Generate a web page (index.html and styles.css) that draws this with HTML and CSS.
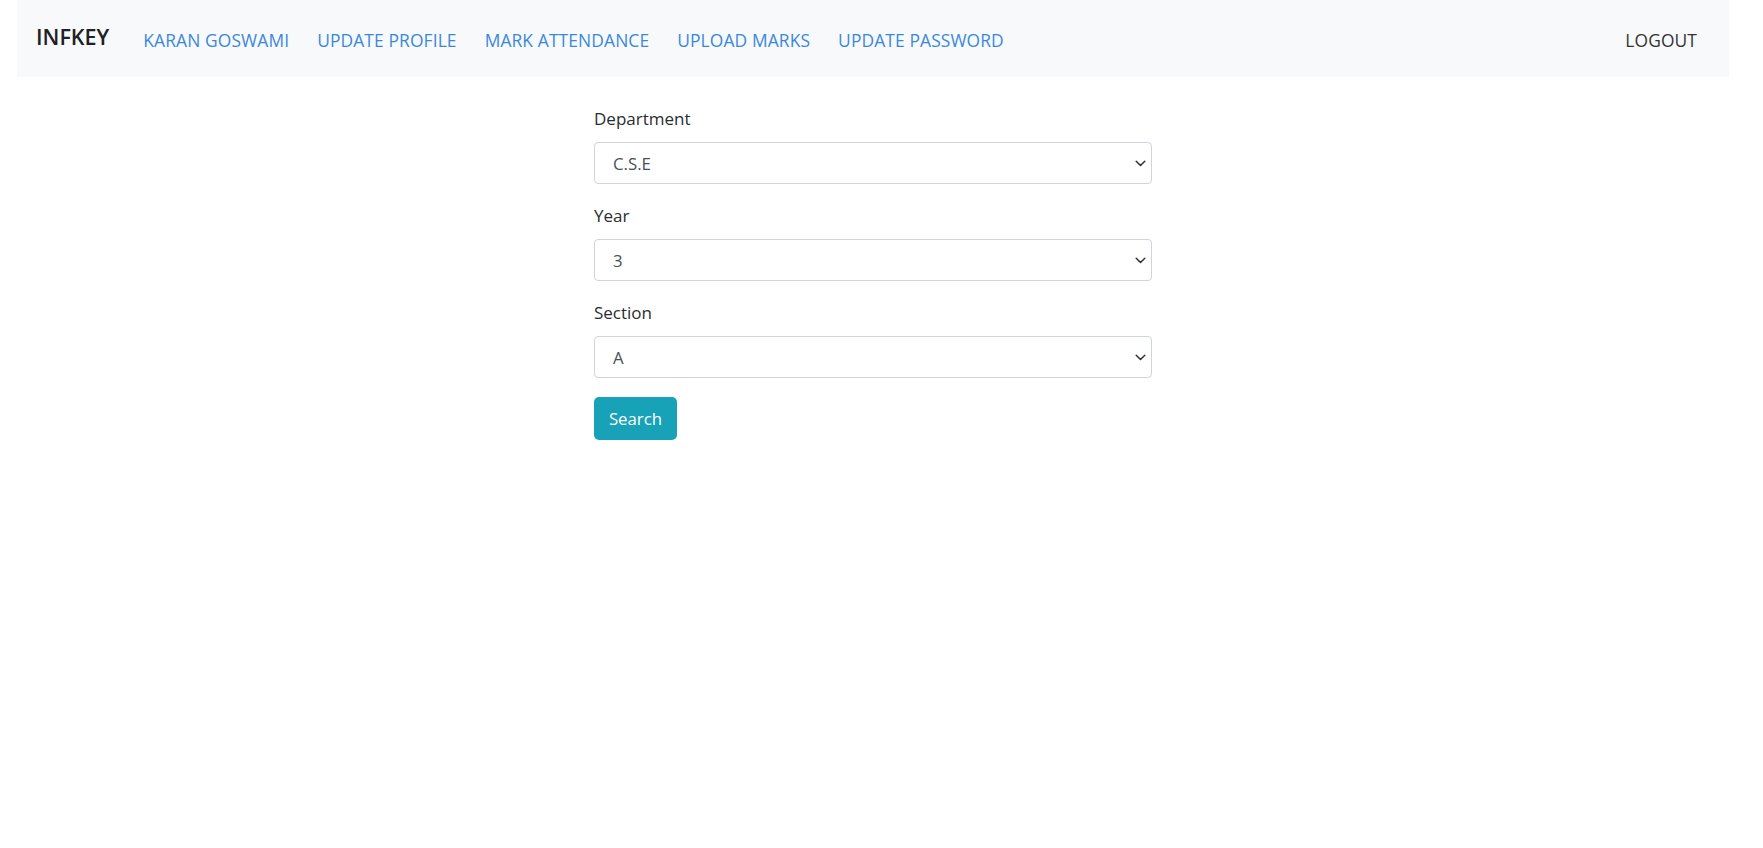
FILE: index.html
```html
<!DOCTYPE html>
<html lang="en">
<head>
<meta charset="utf-8">
<title>INFKEY</title>
<link rel="stylesheet" href="styles.css">
</head>
<body>
<div class="page">
  <nav class="navbar">
    <a class="brand" href="#">INFKEY</a>
    <ul class="nav-links">
      <li><a href="#">KARAN GOSWAMI</a></li>
      <li><a href="#">UPDATE PROFILE</a></li>
      <li><a href="#">MARK ATTENDANCE</a></li>
      <li><a href="#">UPLOAD MARKS</a></li>
      <li><a href="#">UPDATE PASSWORD</a></li>
    </ul>
    <a class="logout" href="#">LOGOUT</a>
  </nav>

  <form class="search-form">
    <div class="group">
      <label for="dept">Department</label>
      <div class="select-wrap">
        <select id="dept"><option>C.S.E</option></select>
        <svg class="chev" width="11" height="7" viewBox="0 0 11 7"><polyline points="1.2,1.2 5.5,5.5 9.8,1.2" fill="none" stroke="#333" stroke-width="1.5" stroke-linecap="round" stroke-linejoin="round"/></svg>
      </div>
    </div>
    <div class="group">
      <label for="year">Year</label>
      <div class="select-wrap">
        <select id="year"><option>3</option></select>
        <svg class="chev" width="11" height="7" viewBox="0 0 11 7"><polyline points="1.2,1.2 5.5,5.5 9.8,1.2" fill="none" stroke="#333" stroke-width="1.5" stroke-linecap="round" stroke-linejoin="round"/></svg>
      </div>
    </div>
    <div class="group">
      <label for="section">Section</label>
      <div class="select-wrap">
        <select id="section"><option>A</option></select>
        <svg class="chev" width="11" height="7" viewBox="0 0 11 7"><polyline points="1.2,1.2 5.5,5.5 9.8,1.2" fill="none" stroke="#333" stroke-width="1.5" stroke-linecap="round" stroke-linejoin="round"/></svg>
      </div>
    </div>
    <button type="button" class="btn-search">Search</button>
  </form>
</div>
</body>
</html>
```

FILE: styles.css
```css
* { box-sizing: border-box; }

html, body {
  margin: 0;
  padding: 0;
  background: #fff;
}

body {
  font-family: "Open Sans", "Noto Sans", "Liberation Sans", sans-serif;
  color: #212529;
  font-size: 17px;
}

.page {
  width: 1746px;
}

.navbar {
  margin: 0 17px;
  height: 77px;
  background: #f8f9fa;
  display: flex;
  align-items: center;
  padding: 2px 32px 0 19px;
}

.brand {
  font-size: 21.5px;
  font-weight: 600;
  color: #1e2125;
  text-decoration: none;
  margin-right: 34px;
  margin-top: -6px;
}

.nav-links {
  list-style: none;
  margin: 0;
  padding: 0;
  display: flex;
  gap: 28px;
  flex: 1;
}

.nav-links a {
  color: #3a88dd;
  text-decoration: none;
  font-size: 17.4px;
  letter-spacing: 0.12px;
}

.logout {
  color: #333;
  text-decoration: none;
  font-size: 17.4px;
  letter-spacing: 0.1px;
}

.search-form {
  width: 558px;
  margin: 29px auto 0;
}

.group {
  margin-bottom: 19px;
}

.group label {
  display: block;
  line-height: 26px;
  font-size: 17px;
  margin-bottom: 10px;
  color: #2a2d31;
}

.select-wrap {
  position: relative;
}

.select-wrap select {
  appearance: none;
  -webkit-appearance: none;
  width: 100%;
  height: 42px;
  border: 1px solid #ced4da;
  border-radius: 4px;
  background: #fff;
  padding: 0 30px 0 18px;
  font-family: inherit;
  font-size: 16.8px;
  color: #495057;
  outline: none;
}

.chev {
  position: absolute;
  right: 6px;
  top: 18px;
  pointer-events: none;
}

.btn-search {
  width: 83px;
  height: 43px;
  border: none;
  border-radius: 5px;
  background: #17a2b8;
  color: #fff;
  font-family: inherit;
  font-size: 16.8px;
  padding: 0;
  cursor: pointer;
}
```
